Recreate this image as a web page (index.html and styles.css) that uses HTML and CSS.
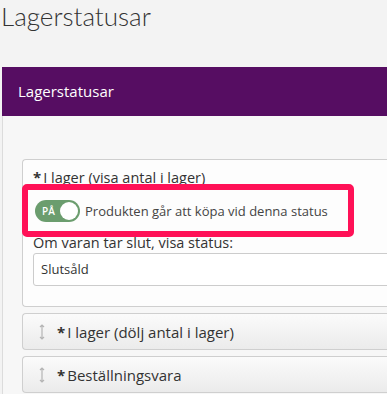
FILE: index.html
```html
<!DOCTYPE html>
<html lang="sv">
<head>
<meta charset="utf-8">
<title>Lagerstatusar</title>
<link rel="stylesheet" href="styles.css">
</head>
<body>
<h1 class="page-title">Lagerstatusar</h1>
<section class="panel">
  <div class="panel-head">Lagerstatusar</div>
  <div class="panel-body">
    <div class="card card-open">
      <div class="card-title"><span class="req">*</span>I lager (visa antal i lager)</div>
      <div class="toggle-row">
        <span class="toggle"><span class="toggle-label">PÅ</span><span class="knob"></span></span>
        <span class="toggle-text">Produkten går att köpa vid denna status</span>
        <span class="highlight"></span>
      </div>
      <div class="field-label">Om varan tar slut, visa status:</div>
      <div class="input">Slutsåld</div>
    </div>
    <div class="card card-closed">
      <span class="drag">
        <svg width="6" height="16" viewBox="0 0 6 16"><path d="M3 1v14M1 3l2-2 2 2M1 13l2 2 2-2" fill="none" stroke="#b5b5b5" stroke-width="1.2"/></svg>
      </span>
      <span class="req">*</span>I lager (dölj antal i lager)
    </div>
    <div class="card card-closed">
      <span class="drag">
        <svg width="6" height="16" viewBox="0 0 6 16"><path d="M3 1v14M1 3l2-2 2 2M1 13l2 2 2-2" fill="none" stroke="#b5b5b5" stroke-width="1.2"/></svg>
      </span>
      <span class="req">*</span>Beställningsvara
    </div>
  </div>
</section>
</body>
</html>
```
FILE: styles.css
```css
html, body {
  margin: 0;
  padding: 0;
  background: #f3f3f3;
  overflow: hidden;
  height: 394px;
}
body {
  font-family: "Open Sans", "Liberation Sans", sans-serif;
  color: #333;
}
.page-title {
  margin: 0;
  padding: 0 0 0 1px;
  height: 67px;
  font-family: Lato, "Open Sans", sans-serif;
  font-size: 26px;
  line-height: 32px;
  font-weight: 300;
  color: #333;
}
.panel {
  margin-left: 2px;
  border-left: 1px solid #dcdcdc;
  background: #f7f7f7;
  min-height: 400px;
}
.panel-head {
  background: #560d62;
  color: #fff;
  height: 49px;
  line-height: 49px;
  padding-left: 16px;
  font-size: 15px;
  margin-left: -1px;
}
.panel-body {
  padding: 43px 0 0 19px;
}
.card {
  border: 1px solid #cfcfcf;
  border-right: none;
  border-radius: 4px 0 0 4px;
  margin-right: -20px;
}
.card-open {
  background: #fdfdfd;
  padding: 7px 0 20px 10px;
}
.card-title {
  font-size: 14.5px;
  line-height: 20px;
}
.req {
  font-weight: 700;
  font-size: 15px;
  margin-right: 2px;
}
.toggle-row {
  position: relative;
  display: flex;
  align-items: center;
  height: 45px;
  font-size: 13px;
}
.toggle {
  display: flex;
  align-items: center;
  justify-content: space-between;
  width: 45px;
  height: 22px;
  border-radius: 11px;
  background: #6b9d6e;
  margin-left: 2px;
  padding: 0 2px 0 7px;
  box-sizing: border-box;
}
.toggle-label {
  color: #fff;
  font-size: 10px;
  font-weight: 600;
}
.knob {
  width: 18px;
  height: 18px;
  border-radius: 50%;
  background: #fff;
}
.toggle-text {
  margin-left: 5px;
  color: #444;
}
.highlight {
  position: absolute;
  left: -11px;
  top: -4px;
  width: 332px;
  height: 53px;
  box-sizing: border-box;
  border: 6px solid #ff1157;
  border-radius: 5px;
}
.field-label {
  font-size: 14.5px;
  line-height: 20px;
}
.input {
  height: 33px;
  box-sizing: border-box;
  border: 1px solid #cccccc;
  border-radius: 3px;
  background: #fff;
  font-size: 13px;
  line-height: 31px;
  padding-left: 7px;
}
.card-closed {
  margin-top: 6px;
  height: 35px;
  display: flex;
  align-items: center;
  background: linear-gradient(#fbfbfb, #ebebeb);
  font-size: 15px;
  padding-left: 16px;
}
.drag {
  display: flex;
  width: 18px;
}
```
